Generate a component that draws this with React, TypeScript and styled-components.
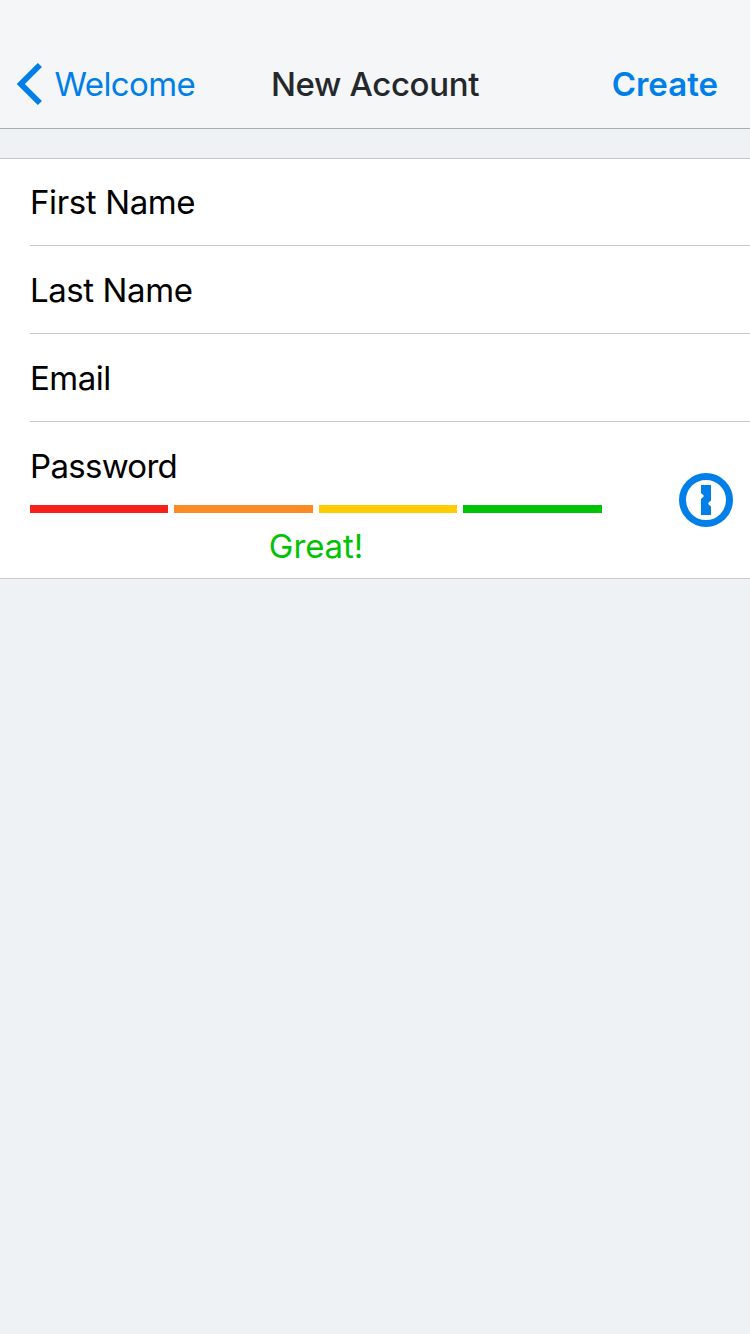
import React from "react";
import styled, { createGlobalStyle } from "styled-components";

const GlobalStyle = createGlobalStyle`
  * { box-sizing: border-box; }
  body {
    margin: 0;
    background: #eef2f5;
    font-family: Inter, "Liberation Sans", sans-serif;
    font-size: 33px;
    line-height: 40px;
    color: #000;
  }
  button {
    padding: 0;
    border: 0;
    background: none;
    font: inherit;
    color: #007fe8;
    white-space: nowrap;
  }
`;

const Screen = styled.main`
  display: flex;
  flex-direction: column;
  min-height: 1334px;
`;

const NavBar = styled.header`
  display: grid;
  grid-template-columns: minmax(0, 1fr) auto minmax(0, 1fr);
  align-items: center;
  height: 129px;
  padding: 40px 16px 0;
  background: #f4f6f8;
  border-bottom: 1px solid #a9abae;
`;

const BackButton = styled.button`
  display: flex;
  align-items: center;
  gap: 11.5px;
  justify-self: start;
`;

const Title = styled.h1`
  margin: 0;
  font-size: inherit;
  font-weight: 500;
  color: #24282c;
  white-space: nowrap;
`;

const CreateButton = styled.button`
  justify-self: end;
  margin-right: 16px;
  && { font-weight: 600; }
`;

const Label = styled.span<{ $tracking: number }>`
  display: inline-block;
  letter-spacing: ${(p) => p.$tracking}px;
  white-space: nowrap;
`;

const Form = styled.form`
  margin-top: 29px;
  background: #fff;
  border-top: 1px solid #c8c7cc;
  border-bottom: 1px solid #c8c7cc;
`;

const Field = styled.div`
  display: flex;
  align-items: center;
  height: 88px;
  margin-left: 30px;
  padding-top: 1px;
  border-bottom: 1px solid #c8c7cc;
  &:first-child { height: 87px; padding-top: 0; }
`;

const PasswordField = styled.div`
  display: flex;
  align-items: center;
  justify-content: space-between;
  height: 156px;
  padding: 0 17px 0 30px;
`;

const PasswordBody = styled.div`
  display: flex;
  flex-direction: column;
  align-self: stretch;
  width: 572px;
  padding-top: 24px;
`;

const Meter = styled.div`
  display: grid;
  grid-template-columns: 138px 139px 138px 139px;
  gap: 6px;
  height: 8px;
  margin-top: 19px;
`;

const Segment = styled.span<{ $color: string }>`
  background: ${(p) => p.$color};
`;

const Strength = styled.div`
  margin-top: 13px;
  text-align: center;
  color: #00c303;
`;

const strengthColors = ["#f72119", "#fb8c24", "#ffcc02", "#00c303"];

const fields = [
  { name: "First Name", tracking: -0.37 },
  { name: "Last Name", tracking: -0.42 },
  { name: "Email", tracking: -0.5 },
];

function Chevron() {
  return (
    <svg width="27" height="44" viewBox="0 0 27 44" fill="none">
      <path d="M23.9 3.05 L4.8 22 L23.9 40.95" stroke="#007fe8" strokeWidth="5.8" />
    </svg>
  );
}

function KeyholeIcon() {
  return (
    <svg width="54" height="54" viewBox="0 0 54 54">
      <circle cx="27" cy="27" r="23.5" fill="none" stroke="#007fe8" strokeWidth="7" />
      <path
        d="M22 12 H32 V27.5 L29.7 29.5 Q28.8 30.5 29.7 31.5 L32 33.5 V42 H22 V26 L24.2 24 Q25.2 23 24.2 22 L22 20 Z"
        fill="#007fe8"
      />
    </svg>
  );
}

export default function App() {
  return (
    <>
      <GlobalStyle />
      <Screen>
        <NavBar>
          <BackButton type="button">
            <Chevron />
            <Label $tracking={-0.6}>Welcome</Label>
          </BackButton>
          <Title>
            <Label $tracking={-0.36}>New Account</Label>
          </Title>
          <CreateButton type="button">
            <Label $tracking={0}>Create</Label>
          </CreateButton>
        </NavBar>
        <Form>
          {fields.map((f) => (
            <Field key={f.name}>
              <Label $tracking={f.tracking}>{f.name}</Label>
            </Field>
          ))}
          <PasswordField>
            <PasswordBody>
              <Label $tracking={-0.7}>Password</Label>
              <Meter>
                {strengthColors.map((c) => (
                  <Segment key={c} $color={c} />
                ))}
              </Meter>
              <Strength>
                <Label $tracking={-0.1}>Great!</Label>
              </Strength>
            </PasswordBody>
            <KeyholeIcon />
          </PasswordField>
        </Form>
      </Screen>
    </>
  );
}
